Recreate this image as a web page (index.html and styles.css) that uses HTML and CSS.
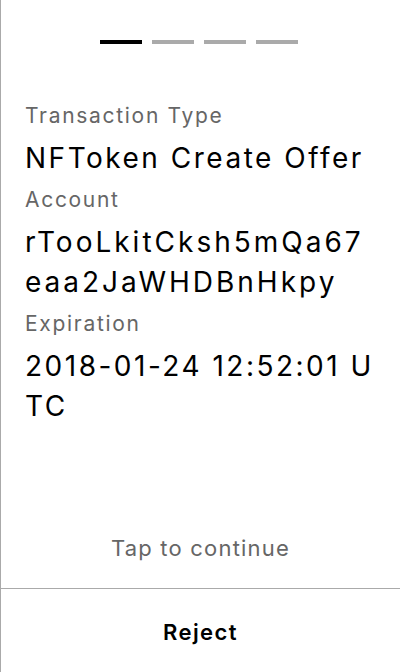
FILE: index.html
```html
<!DOCTYPE html>
<html lang="en">
<head>
<meta charset="utf-8">
<title>NFToken Create Offer</title>
<link rel="stylesheet" href="styles.css">
</head>
<body>
<div class="screen">
  <div class="steps">
    <span class="step active"></span>
    <span class="step"></span>
    <span class="step"></span>
    <span class="step"></span>
  </div>
  <div class="fields">
    <div class="label">Transaction Type</div>
    <div class="value">NFToken Create Offer</div>
    <div class="label">Account</div>
    <div class="value account">rTooLkitCksh5mQa67<wbr>eaa2JaWHDBnHkpy</div>
    <div class="label">Expiration</div>
    <div class="value">2018-01-24 12:52:01 U<wbr>TC</div>
  </div>
  <div class="continue">Tap to continue</div>
  <div class="actions">
    <div class="reject">Reject</div>
  </div>
</div>
</body>
</html>
```

FILE: styles.css
```css
html, body {
  margin: 0;
  padding: 0;
  background: #fff;
}
body {
  font-family: Inter, "Noto Sans", sans-serif;
  color: #000;
}
.screen {
  height: 672px;
  box-sizing: border-box;
  border-left: 1px solid #aaa;
  display: flex;
  flex-direction: column;
}
.steps {
  display: flex;
  justify-content: center;
  gap: 10px;
  padding-top: 40px;
  padding-right: 3px;
}
.step {
  width: 42px;
  height: 4px;
  background: #aaa;
}
.step.active {
  background: #000;
}
.fields {
  padding: 50px 12px 0 24px;
  flex: 1;
}
.label {
  font-size: 21px;
  line-height: 44px;
  letter-spacing: 1.7px;
  color: #666;
}
.value {
  font-size: 28px;
  line-height: 40px;
  letter-spacing: 2.5px;
}
.account {
  letter-spacing: 3px;
}
.continue {
  text-align: center;
  font-size: 22px;
  line-height: 26px;
  letter-spacing: 1.2px;
  color: #666;
  padding-bottom: 27px;
}
.actions {
  border-top: 1px solid #aaa;
  height: 84px;
  display: flex;
  align-items: center;
  justify-content: center;
  padding-top: 3px;
  box-sizing: border-box;
}
.reject {
  font-size: 22px;
  font-weight: 600;
  letter-spacing: 1.4px;
}
```
